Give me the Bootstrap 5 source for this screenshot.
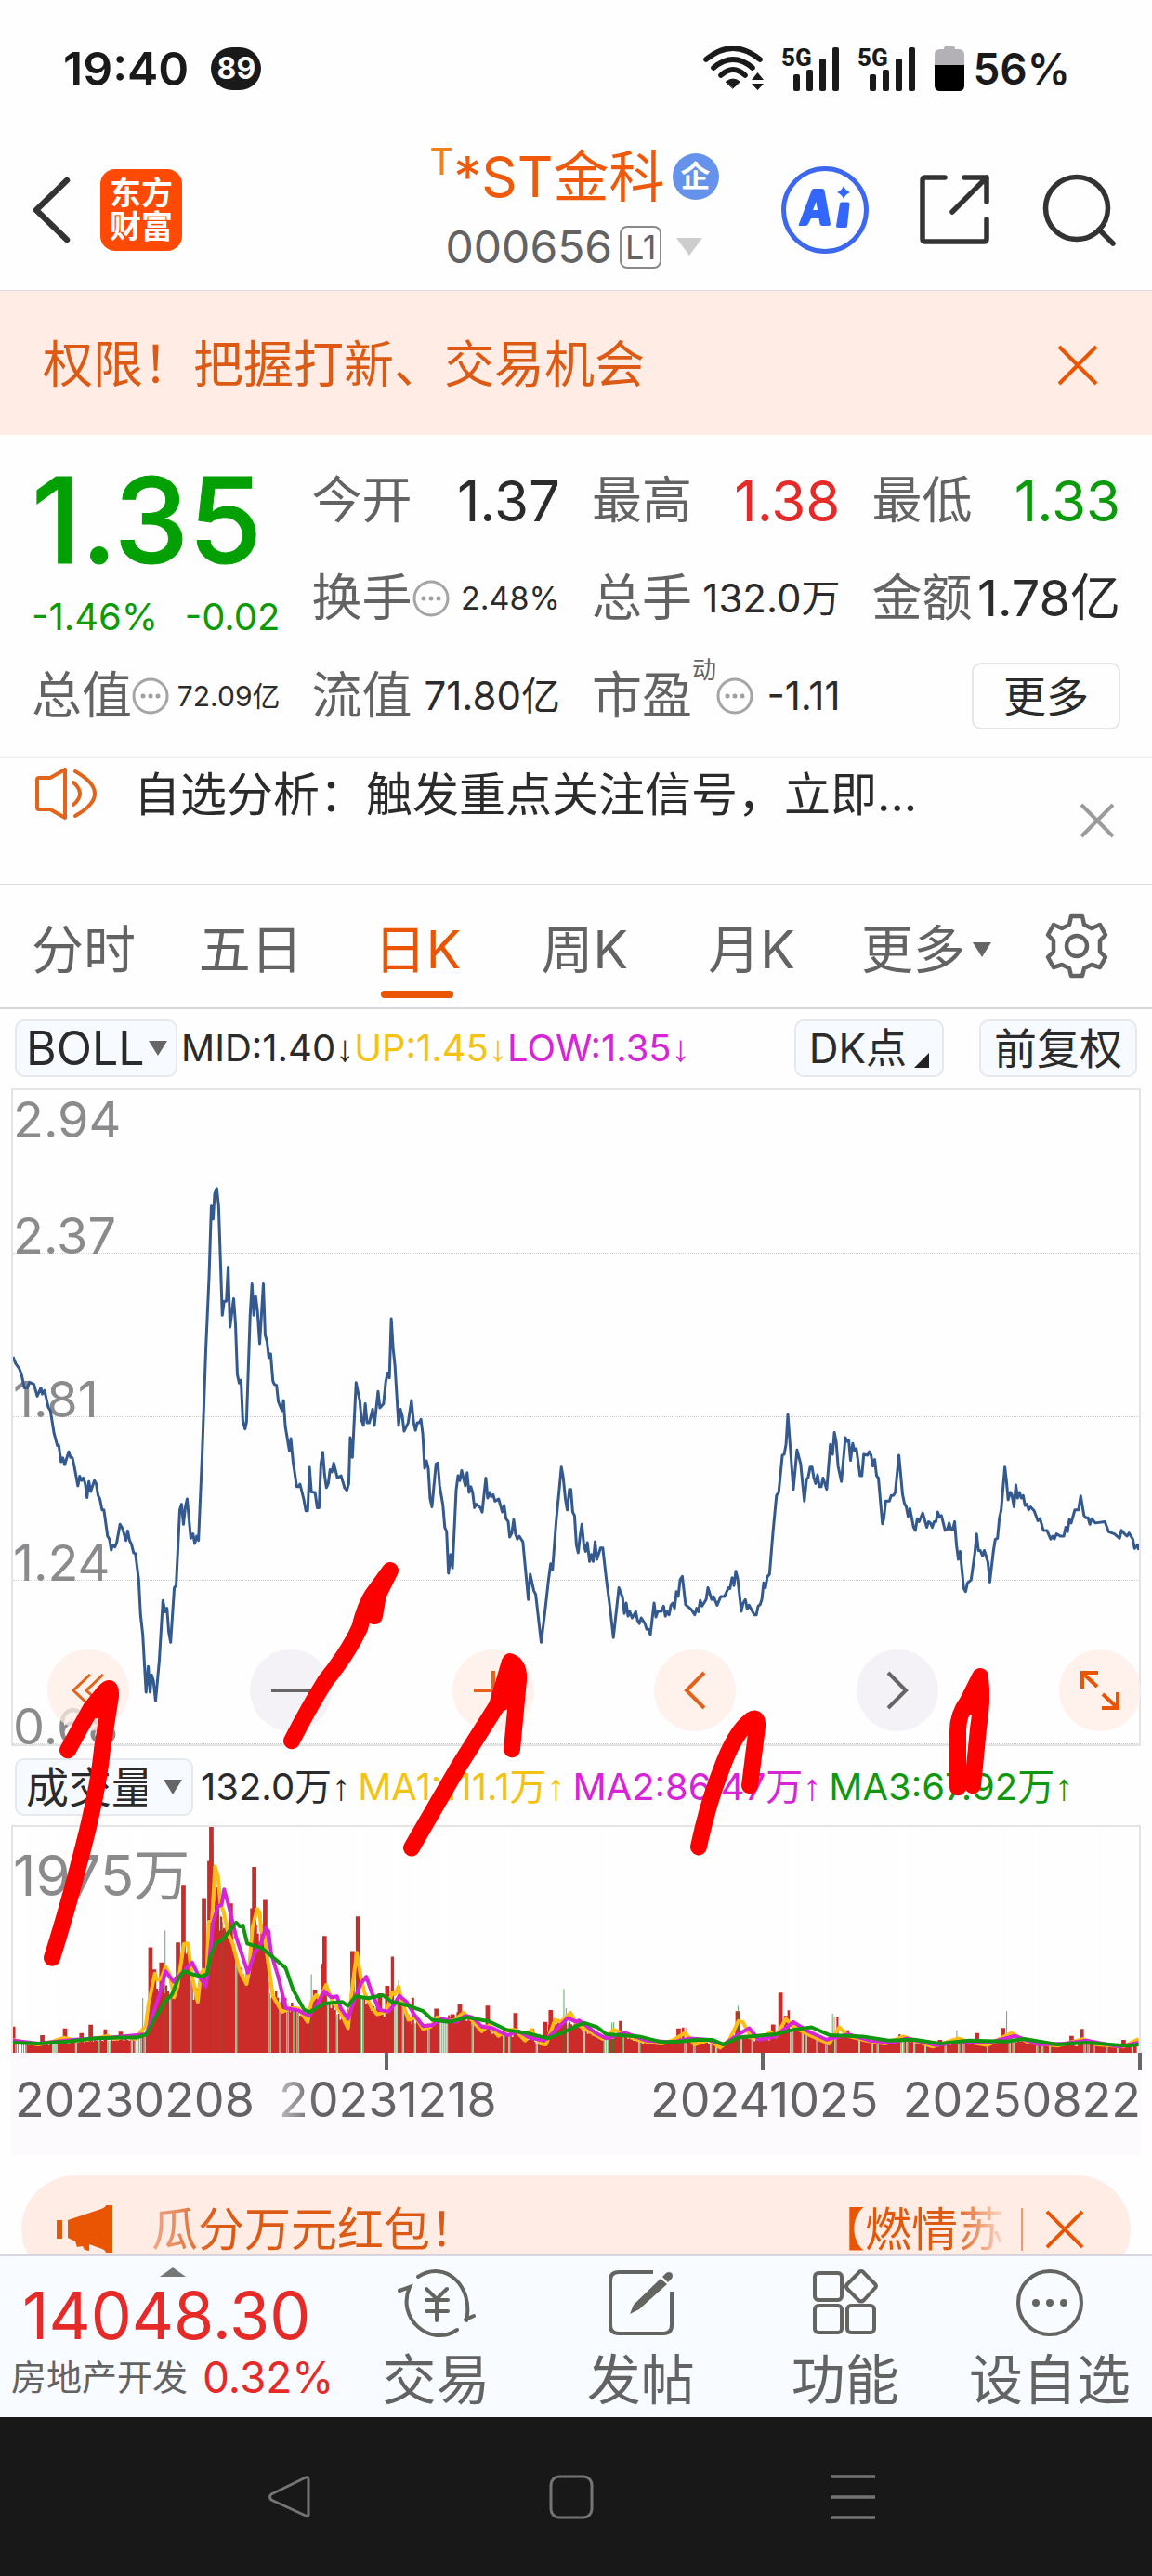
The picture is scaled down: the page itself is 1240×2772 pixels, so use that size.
<!DOCTYPE html>
<html lang="zh-CN">
<head>
<meta charset="utf-8">
<meta name="viewport" content="width=device-width, initial-scale=1">
<title>*ST金科 000656</title>
<link href="https://cdn.jsdelivr.net/npm/bootstrap@5.3.0/dist/css/bootstrap.min.css" rel="stylesheet">
<style>
  :root { --orange:#ea5504; --ink:#2b2b2b; --dim:#636363; --up:#e62a28; --down:#0a9a0a; --hair:#d9d9de; }
  body { font-family: Inter, "Noto Sans CJK SC", sans-serif; color: var(--ink); background:#fefefe; line-height:1; overflow-x:hidden; }
  svg { display:block; flex:none; }
  button { border:0; background:none; padding:0; color:inherit; line-height:1; }
  a { color:inherit; text-decoration:none; }
  .nowrap { white-space:nowrap; }
  .c-orange { color:var(--orange); } .c-up { color:var(--up); } .c-down { color:var(--down); } .c-dim { color:var(--dim); }
  .c-gold { color:#f5c211; } .c-pink { color:#d724d9; } .c-green { color:#0f970f; }

  .sysbar { height:148px; padding:0 88px 0 68px; font-size:50px; font-weight:600; color:#1a1a1a; }
  .sysbar .count { width:54px; height:46px; border-radius:23px; background:#1a1a1a; color:#fff; font-size:32px; font-weight:700; }
  .sysbar .pct { font-size:46px; }
  .sysbar .signals { gap:18px; }
  .topbar { height:165px; padding:0 38px 8px 34px; border-bottom:1px solid var(--hair); }
  .topbar .side { flex:1 1 0; }
  .topbar .tools { gap:52px; }
  .brand { width:88px; height:88px; border-radius:16px; margin-left:30px; background:#ff4a05; color:#fff; font-size:34px; font-weight:700; line-height:36px; }
  .stock-name { font-size:60px; line-height:64px; color:#f0590a; }
  .stock-name .flag { font-size:40px; line-height:32px; color:#f08019; }
  .corp { width:50px; height:50px; border-radius:50%; background:#6592ea; color:#fff; font-size:32px; font-weight:700; }
  .stock-code { font-size:48px; line-height:56px; color:var(--dim); }
  .level { border:2px solid #8a8a8a; border-radius:8px; font-size:36px; line-height:42px; padding:0 4px; }

  .promo { height:155px; background:#ffede5; font-size:54px; padding:4px 58px 0 46px; color:#dc5a14; }
  .quotes { padding:18px 34px 14px; display:grid; grid-template-columns:repeat(4,minmax(0,1fr)); column-gap:34px; grid-auto-rows:105px; }
  .quotes .price-cell { grid-row:span 2; }
  .price { font-size:128px; font-weight:500; line-height:148px; color:#03a003; -webkit-text-stroke:1px #03a003; }
  .change { font-size:40px; line-height:60px; }
  .q-label { font-size:54px; color:var(--dim); }
  .v-xl { font-size:60px; } .v-l { font-size:54px; } .v-m { font-size:42px; } .v-s { font-size:34px; } .v-xs { font-size:30px; }
  .dyn { font-size:26px; align-self:flex-start; color:var(--dim); margin-top:12px; }
  .more-btn { width:160px; height:72px; border:2px solid #e6e6e6; border-radius:10px; font-size:46px; }
  .notice { height:137px; border-top:1px solid #ececec; border-bottom:1px solid var(--hair); padding:10px 40px 0 38px; font-size:50px; line-height:58px; }
  .notice a { margin-left:40px; }
  .notice button { margin-top:38px; }

  .periods { height:134px; border-bottom:2px solid #d8d8dc; font-size:56px; color:var(--dim); }
  .periods .tab { flex:0 0 14.5%; position:relative; line-height:72px; padding-top:8px; }
  .periods .tab.on::after { content:""; position:absolute; left:50%; bottom:-16px; width:78px; margin-left:-39px; height:8px; border-radius:4px; background:var(--orange); }

  .ind-row { padding:11px 16px 12px; height:85px; }
  .ind-row.vol { padding:13px 16px 10px; }
  .chip, select.chip { height:62px; border:2px solid #e6e8ee; border-radius:10px; background-color:#f7faff; font-size:46px; line-height:56px; color:var(--ink); padding:0 14px; width:auto; }
  .chip.dk { margin-right:38px; font-size:44px; }
  select.chip { appearance:none; padding:0 48px 0 10px; background-repeat:no-repeat; background-position:right 10px center; background-size:20px 16px;
    background-image:url("data:image/svg+xml,%3Csvg xmlns='http://www.w3.org/2000/svg' viewBox='0 0 20 16'%3E%3Cpath d='M0 0h20L10 16z' fill='%23666'/%3E%3C/svg%3E"); }
  select.boll { width:175px; padding-right:30px; background-position:right 9px center; font-size:50px; }
  select.volsel { width:192px; }
  .readout { font-size:40px; }
  .readout i { font-family:"Liberation Sans","DejaVu Sans",sans-serif; font-style:normal; }

  .plot { margin:0 12px; border:2px solid #e4e4e4; position:relative; }
  .plot > svg.curve { position:absolute; inset:0; width:100%; height:100%; }
  .plot .band { height:176px; border-bottom:1px dotted #d2d2d2; }
  .plot .band:last-of-type { border-bottom:0; }
  .axis-num { font-size:54px; line-height:36px; color:#8b8a8c; }
  .plot .top-num { position:absolute; left:0; top:14px; }
  .round-tools { position:absolute; left:37px; right:-2px; bottom:14px; }
  .round-tools button { width:88px; height:88px; border-radius:50%; background:rgba(255,236,228,.75); }
  .round-tools button.grey { background:rgba(243,240,246,.85); }
  .volplot { height:245px; border-bottom:0; }
  .volplot .axis-num { font-size:60px; position:absolute; left:0; top:34px; }
  .dates { margin:0 12px; background:#fdfafe; height:110px; font-size:52px; color:var(--dim); }
  .dates .tick { flex:1; height:19px; border-right:4px solid #666; }
  .dates .tick-row { margin-right:-1px; }
  .dates .labels { display:grid; grid-template-columns:minmax(0,1fr) minmax(0,2fr) minmax(0,2fr) minmax(0,1fr); padding-top:6px; line-height:52px; }
  .fade-in { background:linear-gradient(90deg,#bbb,#636363 18%); -webkit-background-clip:text; background-clip:text; color:transparent; }
  .marks { position:absolute; inset:0; width:100%; height:100%; pointer-events:none; z-index:5; }

  .ticker-wrap { height:107px; padding:22px 23px 0; overflow:hidden; }
  .ticker { height:116px; border-radius:58px; background:#ffede5; padding:0 50px 0 38px; font-size:50px; color:#dc5a14; }
  .ticker .msg { flex:1; margin-left:40px; line-height:60px; }
  .ticker .msg a { color:transparent; -webkit-background-clip:text; background-clip:text; }
  .ticker .lead-msg { background-image:linear-gradient(90deg,#f0a888,#dc5a14 20%); }
  .ticker .next-msg { background-image:linear-gradient(90deg,#ea5504 20%,#dc5a14 72%,#fbdccd); }
  .ticker .rule { width:2px; height:46px; margin-left:18px; background:#e89c78; }
  .dock { height:175px; border-top:2px solid #d6d6de; background:#f8fbff; color:var(--dim); }
  .dock .sector { flex:0 0 354px; padding:12px 0 0 12px; }
  .dock .idx { font-size:70px; line-height:84px; padding-left:12px; }
  .dock .sub { font-size:38px; line-height:48px; }
  .dock .sub b { font-weight:400; font-size:46px; }
  .dock .item { flex:1; font-size:58px; line-height:72px; padding-top:11px; }
  .navkeys { height:171px; background:#181818; padding-right:10px; }
  .navkeys .keys { width:74%; }
</style>
</head>
<body>
<div class="sysbar d-flex align-items-center justify-content-between">
  <div class="d-flex align-items-center gap-4"><span>19:40</span><span class="count d-flex align-items-center justify-content-center">89</span></div>
  <div class="signals d-flex align-items-center">
    <svg width="66" height="48" viewBox="0 0 66 48" fill="none" stroke="#1a1a1a" stroke-width="5.6" stroke-linecap="round">
      <path d="M3 14Q32-10 61 14M11 23Q32 5 53 23M19 31Q32 19 45 31"/><path d="M24.500 38Q32 32 39.500 38L32 45z" fill="#1a1a1a" stroke-width="1"/><path d="M52 36h13L58.500 28zM52 40h13L58.500 47z" fill="#1a1a1a" stroke="none"/></svg>
    <svg width="64" height="52" viewBox="0 0 64 52" fill="#1a1a1a"><text x="0" y="23" font-family="Roboto" font-size="26" font-weight="800">5G</text><rect x="13" y="32" width="7" height="18" rx="2"/><rect x="27" y="27" width="7" height="23" rx="2"/><rect x="41" y="15" width="7" height="35" rx="2"/><rect x="55" y="3" width="7" height="47" rx="2"/></svg>
    <svg width="64" height="52" viewBox="0 0 64 52" fill="#1a1a1a"><text x="0" y="23" font-family="Roboto" font-size="26" font-weight="800">5G</text><rect x="13" y="32" width="7" height="18" rx="2"/><rect x="27" y="27" width="7" height="23" rx="2"/><rect x="41" y="15" width="7" height="35" rx="2"/><rect x="55" y="3" width="7" height="47" rx="2"/></svg>
    <span class="d-flex align-items-center gap-2"><svg width="34" height="52" viewBox="0 0 34 52"><path d="M11 5Q11 1 15 1h4q4 0 4 4h4q6 0 6 6v12H1V11q0-6 6-6z" fill="#b3b1b6"/><path d="M1 22h32v22q0 6-6 6H7q-6 0-6-6z" fill="#000"/></svg>
    <span class="pct">56%</span></span>
  </div>
</div>

<header class="topbar d-flex align-items-center">
  <div class="side d-flex align-items-center">
    <button aria-label="返回"><svg width="44" height="72" viewBox="0 0 44 72" fill="none" stroke="#333" stroke-width="6.500" stroke-linecap="round" stroke-linejoin="round"><path d="M38 4L5 36l33 32"/></svg></button>
    <a href="#" class="brand d-block text-center pt-2 nowrap">东方<br>财富</a>
  </div>
  <div class="text-center nowrap">
    <div class="stock-name d-flex align-items-center justify-content-center"><span class="flag align-self-start">T</span><span>*ST金科</span><span class="corp d-flex align-items-center justify-content-center ms-2">企</span></div>
    <div class="stock-code d-flex align-items-center justify-content-center mt-3"><span>000656</span><span class="level ms-2">L1</span><svg class="ms-3" width="28" height="20" viewBox="0 0 28 20"><path d="M0 0h28L14 19z" fill="#cdcdcd"/></svg></div>
  </div>
  <div class="side tools d-flex align-items-center justify-content-end">
    <button aria-label="AI"><svg width="96" height="96" viewBox="0 0 96 96"><circle cx="48" cy="48" r="44.500" fill="none" stroke="#3d68ee" stroke-width="5"/><g fill="#3366fb"><path fill-rule="evenodd" d="M34 26q1-1 2-1h9q2 0 2.500 2l6.500 36q0 2-2 2h-7q-2 0-2.500-2l-1-6H33l-3 6q-1 2-3 2h-6q-2 0-1-2zM38.500 39L35 48h5z"/><path d="M64 41q0-1.500 2-1.500h6.500q2 0 2 2L72 65q0 2-2 2h-8q-2 0-2-2z"/><path d="M68 22q2 5 7 7-5 2-7 7-2-5-7-7 5-2 7-7z"/></g></svg></button>
    <button aria-label="分享"><svg width="80" height="80" viewBox="0 0 80 80" fill="none" stroke="#333" stroke-width="5.500" stroke-linecap="round" stroke-linejoin="round"><path d="M29 5H8q-3 0-3 3v63q0 3 3 3h63q3 0 3-3V50M50 5h24v26M74 5L37 42"/></svg></button>
    <button aria-label="搜索"><svg width="82" height="80" viewBox="4 0 82 80" fill="none" stroke="#333" stroke-width="5.500" stroke-linecap="round"><circle cx="43" cy="38" r="33.500"/><path d="M67 61l15 15"/></svg></button>
  </div>
</header>

<div class="promo d-flex align-items-center justify-content-between">
  <span class="nowrap">权限！把握打新、交易机会</span>
  <button aria-label="关闭"><svg width="44" height="44" viewBox="0 0 44 44" stroke="#ea5504" stroke-width="4"><path d="M2 2l40 40M42 2L2 42"/></svg></button>
</div>

<section class="quotes nowrap">
  <div class="price-cell d-flex flex-column">
    <div class="price">1.35</div>
    <div class="change c-down d-flex justify-content-between"><span>-1.46%</span><span>-0.02</span></div>
  </div>
  <div class="d-flex align-items-center justify-content-between"><span class="q-label">今开</span><span class="v-xl">1.37</span></div>
  <div class="d-flex align-items-center justify-content-between"><span class="q-label">最高</span><span class="v-xl c-up">1.38</span></div>
  <div class="d-flex align-items-center justify-content-between"><span class="q-label">最低</span><span class="v-xl c-down">1.33</span></div>
  <div class="d-flex align-items-center justify-content-between"><span class="d-flex align-items-center"><span class="q-label">换手</span><svg width="40" height="40" viewBox="0 0 40 40"><use href="#dots"/></svg></span><span class="v-s">2.48%</span></div>
  <div class="d-flex align-items-center justify-content-between"><span class="q-label">总手</span><span class="v-m">132.0万</span></div>
  <div class="d-flex align-items-center justify-content-between"><span class="q-label">金额</span><span class="v-l">1.78亿</span></div>
  <div class="d-flex align-items-center justify-content-between"><span class="d-flex align-items-center"><span class="q-label">总值</span><svg width="40" height="40" viewBox="0 0 40 40"><use href="#dots"/></svg></span><span class="v-xs">72.09亿</span></div>
  <div class="d-flex align-items-center justify-content-between"><span class="q-label">流值</span><span class="v-m">71.80亿</span></div>
  <div class="d-flex align-items-center justify-content-between"><span class="d-flex align-items-center align-self-stretch"><span class="q-label">市盈</span><span class="dyn">动</span><svg width="40" height="40" viewBox="0 0 40 40"><use href="#dots"/></svg></span><span class="v-m">-1.11</span></div>
  <div class="d-flex align-items-center justify-content-end"><button class="more-btn">更多</button></div>
</section>
<svg width="0" height="0" class="position-absolute"><defs><g id="dots"><circle cx="20" cy="20" r="18" fill="none" stroke="#a5a5a5" stroke-width="3"/><g fill="#a0a0a0"><circle cx="12" cy="20" r="2.500"/><circle cx="20" cy="20" r="2.500"/><circle cx="28" cy="20" r="2.500"/></g></g></defs></svg>

<div class="notice d-flex align-items-start">
  <svg width="66" height="56" viewBox="0 0 66 56" fill="none" stroke="#e2641c" stroke-width="4" stroke-linejoin="round" stroke-linecap="round"><path d="M2 13q0-2 2-2h12L32 2v52L16 45H4q-2 0-2-2zM41 16q14 12 0 24M43 4q42 24 0 48"/></svg>
  <a href="#" class="flex-grow-1 nowrap">自选分析：触发重点关注信号，立即...</a>
  <button aria-label="关闭提示"><svg width="38" height="38" viewBox="0 0 38 38" stroke="#9b9b9b" stroke-width="4"><path d="M2 2l34 34M36 2L2 36"/></svg></button>
</div>

<nav class="periods d-flex align-items-center nowrap text-center">
  <a href="#" class="tab">分时</a><a href="#" class="tab">五日</a><a href="#" class="tab on c-orange">日K</a><a href="#" class="tab">周K</a><a href="#" class="tab">月K</a>
  <a href="#" class="tab d-flex align-items-center justify-content-center ps-3">更多<svg class="ms-2" width="20" height="16" viewBox="0 0 20 16"><path d="M0 0h20L10 16z" fill="#666"/></svg></a>
  <button class="flex-grow-1 d-flex justify-content-center" aria-label="设置"><svg width="70" height="70" viewBox="0 0 70 70" fill="none" stroke="#636363" stroke-width="4.500" stroke-linejoin="round"><circle cx="35" cy="35" r="11"/><path d="M29 3h12l2 9 8 4 9-4 6 11-6 6v12l6 6-6 11-9-3-8 4-2 8H29l-2-8-8-4-9 3L4 47l6-6V29l-6-6 6-11 9 4 8-4z"/></svg></button>
</nav>

<main class="position-relative">
  <div class="ind-row d-flex align-items-center nowrap">
    <select class="chip boll" aria-label="主图指标"><option>BOLL</option></select>
    <span class="readout ms-1"><span>MID:1.40<i>↓</i></span><span class="c-gold">UP:1.45<i>↓</i></span><span class="c-pink">LOW:1.35<i>↓</i></span></span>
    <button class="chip dk ms-auto d-flex align-items-center">DK点<svg class="ms-2 align-self-end mb-2" width="16" height="16" viewBox="0 0 16 16"><path d="M16 0v16H0z" fill="#222"/></svg></button>
    <button class="chip">前复权</button>
  </div>

  <div class="plot">
    <div class="band d-flex flex-column justify-content-end"><span class="axis-num">2.37</span></div>
    <div class="band d-flex flex-column justify-content-end"><span class="axis-num">1.81</span></div>
    <div class="band d-flex flex-column justify-content-end"><span class="axis-num">1.24</span></div>
    <div class="band d-flex flex-column justify-content-end"><span class="axis-num">0.68</span></div>
    <span class="axis-num top-num">2.94</span>
    <svg class="curve" viewBox="31 25 3072 1496" preserveAspectRatio="none" fill="none" stroke="#34598f">
      <polyline vector-effect="non-scaling-stroke" stroke-width="3" stroke-linejoin="round" points="31,635 38,650 48,662 54,675 62,706 70,706 76,693 88,698 97,725 107,706 111,720 117,712 127,750 133,758 143,810 152,838 156,838 162,875 167,866 172,882 183,852 188,865 193,866 198,885 208,930 213,908 218,918 223,912 228,925 233,957 238,920 243,943 253,918 258,925 263,952 268,960 274,985 279,985 289,1045 294,1052 299,1077 303,1065 309,1070 314,1060 323,1018 330,1028 339,1055 344,1033 349,1055 354,1063 360,1083 365,1085 374,1145 379,1225 385,1270 394,1402 400,1343 405,1402 409,1362 414,1375 420,1422 430,1330 440,1192 446,1218 451,1210 456,1265 461,1288 471,1163 476,1158 486,985 491,972 496,1018 501,980 506,960 516,1050 522,1040 527,1062 532,1045 537,1055 547,860 557,620 566,450 572,290 577,320 581,262 587,250 592,290 602,540 607,508 613,508 618,430 623,567 633,502 638,560 643,675 648,695 653,688 658,780 664,800 668,785 678,540 683,468 688,540 693,496 698,530 704,605 714,468 719,585 724,600 729,637 734,628 740,690 744,698 750,700 755,738 765,758 769,735 774,795 785,850 789,822 795,875 805,932 810,932 814,926 824,960 830,987 835,987 840,888 845,944 855,945 861,980 866,980 871,880 876,853 881,905 886,934 891,925 896,893 901,898 906,878 916,912 926,907 936,935 942,940 947,925 951,820 957,865 967,694 977,735 982,780 987,792 992,742 997,786 1003,786 1012,755 1017,792 1027,714 1032,752 1042,742 1048,692 1053,672 1058,683 1063,548 1068,615 1073,655 1083,792 1088,755 1093,770 1098,805 1109,786 1118,735 1124,785 1129,803 1134,786 1139,786 1144,778 1149,812 1154,890 1159,873 1164,890 1169,960 1174,978 1185,880 1190,878 1195,930 1204,975 1209,1025 1214,1035 1219,1130 1225,1087 1230,1118 1240,940 1245,907 1250,918 1255,895 1265,930 1270,900 1275,945 1280,932 1285,945 1290,980 1295,972 1306,980 1311,990 1321,912 1326,958 1331,945 1336,955 1341,950 1346,965 1356,960 1366,990 1371,975 1376,1005 1382,1012 1386,1047 1392,1038 1397,1007 1402,1040 1407,1052 1412,1045 1422,1058 1437,1190 1442,1132 1452,1170 1457,1178 1472,1288 1482,1220 1492,1145 1498,1108 1503,1122 1513,1010 1522,932 1527,887 1532,910 1538,960 1543,985 1549,938 1553,938 1558,990 1563,998 1568,1065 1573,1083 1578,1045 1583,1018 1588,1062 1593,1080 1598,1060 1604,1103 1609,1087 1614,1103 1619,1058 1624,1098 1634,1072 1640,1072 1650,1145 1660,1210 1669,1277 1684,1163 1694,1185 1699,1222 1704,1198 1709,1228 1714,1218 1720,1232 1730,1218 1735,1238 1740,1245 1745,1232 1755,1245 1760,1258 1765,1258 1770,1270 1780,1198 1785,1230 1790,1217 1800,1217 1806,1205 1811,1228 1816,1218 1821,1225 1826,1203 1831,1198 1836,1210 1841,1172 1846,1183 1851,1145 1857,1137 1866,1202 1881,1212 1891,1225 1896,1210 1901,1218 1906,1192 1911,1205 1922,1190 1927,1163 1937,1190 1942,1183 1952,1203 1962,1183 1972,1183 1983,1163 1987,1165 1993,1140 1998,1158 2003,1125 2008,1142 2018,1217 2023,1198 2029,1190 2034,1212 2039,1203 2049,1218 2054,1225 2059,1225 2064,1205 2069,1202 2074,1190 2079,1152 2084,1163 2089,1138 2095,1132 2104,1040 2114,952 2120,945 2130,860 2135,858 2140,835 2145,767 2160,938 2170,848 2180,880 2190,965 2196,915 2200,912 2206,887 2211,887 2216,912 2221,925 2226,905 2231,932 2236,932 2241,912 2251,938 2261,835 2267,858 2272,808 2277,830 2282,885 2291,920 2302,820 2306,828 2311,825 2316,872 2322,833 2327,850 2332,845 2342,907 2347,907 2352,858 2362,860 2367,852 2372,860 2377,885 2382,870 2387,907 2392,912 2403,1017 2407,1005 2412,965 2422,965 2427,952 2433,952 2438,945 2448,860 2458,950 2463,970 2468,978 2473,1000 2478,982 2488,1025 2493,1032 2498,1005 2503,1012 2513,992 2524,1025 2529,1012 2534,1015 2539,1025 2544,1012 2549,1012 2554,990 2559,1002 2564,998 2574,1032 2580,1030 2585,1015 2590,1030 2595,1030 2600,1012 2605,1065 2610,1098 2615,1080 2625,1165 2630,1172 2635,1152 2645,1145 2655,1085 2660,1040 2665,1078 2670,1078 2676,1090 2681,1078 2691,1105 2696,1150 2706,1078 2711,1052 2717,1050 2722,1005 2727,985 2737,887 2741,915 2746,962 2752,945 2756,950 2762,978 2767,928 2772,958 2777,945 2782,958 2787,952 2792,975 2797,972 2802,985 2807,978 2817,987 2827,1010 2833,1005 2842,1032 2852,1032 2862,1052 2867,1045 2872,1052 2878,1040 2888,1045 2898,1045 2903,1025 2908,1035 2913,1007 2918,1015 2928,985 2938,985 2944,953 2953,998 2958,1003 2964,1003 2969,1018 2974,1005 2984,1015 3010,1012 3020,1035 3036,1040 3050,1050 3055,1032 3066,1042 3070,1045 3076,1038 3086,1052 3091,1073 3099,1065 3102,1077"/>
    </svg>
    <div class="round-tools d-flex justify-content-between">
      <button class="d-flex align-items-center justify-content-center c-orange" aria-label="最早"><svg width="40" height="36" viewBox="0 0 40 36" fill="none" stroke="#e2641c" stroke-width="3"><path d="M22 1L4 18l18 17M36 1L18 18l18 17"/></svg></button>
      <button class="grey d-flex align-items-center justify-content-center" aria-label="缩小"><svg width="44" height="36" viewBox="0 0 44 36" stroke="#666" stroke-width="4"><path d="M1 18h42"/></svg></button>
      <button class="d-flex align-items-center justify-content-center" aria-label="放大"><svg width="44" height="44" viewBox="0 0 44 44" stroke="#e2641c" stroke-width="4"><path d="M1 22h42M22 1v42"/></svg></button>
      <button class="d-flex align-items-center justify-content-center" aria-label="左移"><svg width="26" height="42" viewBox="0 0 26 42" fill="none" stroke="#e2641c" stroke-width="4"><path d="M23 2L4 21l19 19"/></svg></button>
      <button class="grey d-flex align-items-center justify-content-center" aria-label="右移"><svg width="26" height="42" viewBox="0 0 26 42" fill="none" stroke="#666" stroke-width="4"><path d="M3 2l19 19L3 40"/></svg></button>
      <button class="d-flex align-items-center justify-content-center" aria-label="全屏"><svg width="46" height="46" viewBox="0 0 46 46" fill="none" stroke="#ea5504" stroke-width="4"><path d="M21 4H4v17M4 4l16 15M42 25v17H25M42 42L26 27"/></svg></button>
    </div>
  </div>

  <div class="ind-row vol d-flex align-items-center nowrap">
    <select class="chip volsel" aria-label="副图指标"><option>成交量</option></select>
    <span class="readout ms-2">132.0万<i>↑</i></span>
    <span class="readout ms-2 c-gold">MA1:111.1万<i>↑</i></span>
    <span class="readout ms-2 c-pink">MA2:86.47万<i>↑</i></span>
    <span class="readout ms-2 c-green">MA3:67.92万<i>↑</i></span>
  </div>

  <div class="plot volplot">
    <svg class="curve" viewBox="31 312 3072 733" preserveAspectRatio="none" fill="none">
      <g id="bars"></g>
      <g stroke-width="4" stroke-linejoin="round">
        <polyline vector-effect="non-scaling-stroke" stroke="#fdbd12" points="31,1003 60,1010 100,1018 140,1008 170,996 200,1005 250,1000 290,990 310,1000 340,990 365,1000 385,968 393,960 400,890 418,788 425,808 435,805 447,765 458,790 470,865 480,830 497,692 508,690 520,800 535,880 543,790 550,775 560,790 565,620 574,615 582,440 590,470 597,560 606,590 618,660 630,690 650,780 668,822 675,780 684,640 697,578 704,590 708,650 716,660 740,860 765,912 790,900 810,902 835,945 845,880 858,858 868,870 885,825 903,880 925,915 945,965 955,850 969,720 980,800 990,850 1010,900 1025,920 1050,912 1065,850 1073,855 1083,830 1090,870 1110,938 1130,930 1150,968 1170,960 1188,930 1210,940 1235,940 1260,915 1280,935 1310,975 1330,955 1355,990 1380,970 1400,970 1428,1005 1445,970 1470,1015 1485,1018 1510,938 1525,945 1552,915 1568,950 1588,965 1640,1000 1670,970 1700,985 1740,1005 1800,1015 1830,1005 1865,980 1890,1018 1930,1003 1960,1028 1985,1003 2010,942 2022,945 2045,995 2070,998 2098,978 2112,992 2140,935 2160,960 2200,985 2258,1015 2285,962 2310,990 2360,1005 2410,1015 2460,992 2540,1025 2610,998 2640,1010 2690,1020 2755,980 2800,1010 2880,1022 2950,1000 2990,1018 3060,1025 3102,1000"/>
        <polyline vector-effect="non-scaling-stroke" stroke="#d724d9" points="31,1005 100,1015 200,1002 300,995 395,985 410,930 430,860 447,780 470,815 500,775 520,752 535,790 557,830 565,760 577,620 590,570 600,565 607,515 620,570 640,670 672,785 690,720 705,700 720,640 728,650 735,720 755,800 775,900 810,908 838,925 860,890 880,845 900,865 915,862 925,900 945,935 960,880 980,820 995,798 1010,850 1030,905 1055,912 1070,890 1085,860 1105,880 1125,920 1150,958 1175,955 1200,935 1240,945 1265,925 1285,930 1310,960 1340,965 1380,988 1410,975 1440,995 1480,1005 1500,985 1545,932 1568,945 1575,940 1620,980 1650,998 1700,980 1760,1005 1830,1010 1880,998 1930,1003 1970,1018 2010,985 2040,965 2065,1002 2110,992 2160,945 2200,975 2250,1002 2310,985 2370,1005 2430,1012 2470,998 2550,1020 2620,1008 2700,1010 2765,990 2830,1018 2900,1015 2960,1005 3050,1025 3102,1012"/>
        <polyline vector-effect="non-scaling-stroke" stroke="#119611" points="31,1012 100,1015 180,1008 250,998 320,995 370,995 395,985 420,930 445,880 465,855 480,810 497,780 520,790 545,797 560,790 570,730 585,690 605,675 640,622 650,635 658,632 670,690 695,700 710,705 745,740 775,770 795,840 825,905 840,913 880,885 930,880 945,893 965,862 1000,868 1040,858 1065,880 1110,892 1150,910 1175,938 1220,945 1270,930 1330,943 1380,972 1430,980 1490,998 1530,980 1568,958 1590,948 1625,962 1650,985 1740,992 1800,1010 1850,1008 1900,1002 1940,1003 1970,1018 2010,995 2060,990 2110,985 2160,970 2210,962 2260,988 2350,992 2420,1005 2490,1002 2560,1015 2640,1005 2740,1008 2790,1000 2880,1018 2960,1012 3070,1022 3102,1018"/>
      </g>
    </svg>
    <span class="axis-num">1975万</span>
  </div>
  <div class="dates">
    <div class="tick-row d-flex"><span class="tick"></span><span class="tick"></span><span class="tick"></span></div>
    <div class="labels nowrap"><span class="ps-1">20230208</span><span class="text-center"><span class="fade-in">20231218</span></span><span class="text-center">20241025</span><span class="d-flex justify-content-end">20250822</span></div>
  </div>

  <svg class="marks" viewBox="0 1087 1240 1231" preserveAspectRatio="none" fill="none" stroke="#f00" stroke-width="18" stroke-linecap="round" stroke-linejoin="round">
    <path d="M73 1883L98 1838 112 1821Q120 1811 119 1825L110 1882Q107 1915 94 1970 74 2050 56 2106M102 1840L113 1835"/>
    <path d="M314 1873Q332 1838 350 1809 375 1778 387 1752 393 1728 401 1716L420 1690 407 1716 403 1739 396 1732"/>
    <path d="M443 1988L494 1900Q518 1862 535 1835L549 1788Q559 1792 558 1808L551 1882M540 1832L552 1800"/>
    <path d="M752 1987Q762 1940 776 1905 790 1865 808 1851 816 1846 815 1858L807 1921"/>
    <path d="M1031 1923V1862Q1031 1845 1042 1830L1055 1804Q1058 1830 1053 1860L1047 1921M1044 1836L1050 1820"/>
  </svg>
</main>

<div class="ticker-wrap">
  <div class="ticker d-flex align-items-center">
    <svg width="62" height="52" viewBox="0 0 62 52" fill="#ea5504"><path d="M0 16h6v20H0zM12 16L48 4q5-2 5-4h7v51h-7q0-2-4-4l-14-5v7l-5-1-2-4-6 1-2-6-8-4z"/></svg>
    <div class="msg d-flex justify-content-between nowrap"><a href="#" class="lead-msg">瓜分万元红包！</a><a href="#" class="next-msg">【燃情苏</a></div>
    <span class="rule"></span>
    <button class="ms-4" aria-label="关闭横幅"><svg width="42" height="42" viewBox="0 0 44 44" stroke="#ea5504" stroke-width="4"><path d="M2 2l40 40M42 2L2 42"/></svg></button>
  </div>
</div>

<footer>
  <div class="dock d-flex nowrap">
    <div class="sector"><svg class="mx-auto" width="28" height="10" viewBox="0 0 28 10"><path d="M14 0l14 10H0z" fill="#777"/></svg>
      <div class="idx c-up">14048.30</div>
      <div class="sub d-flex align-items-center"><span>房地产开发</span><b class="c-up ms-3">0.32%</b></div>
    </div>
    <a href="#" class="item d-flex flex-column align-items-center"><svg width="84" height="78" viewBox="0 0 84 78" fill="none" stroke="#646461" stroke-width="4" stroke-linecap="round"><path d="M22 11C52-8 82 22 74 58M2 26l11-4C-2 55 35 88 64 68M73 57l9-4M31 24l11 11 11-11M42 35v23M31 36h23M31 48h23"/></svg><span class="mt-2">交易</span></a>
    <a href="#" class="item d-flex flex-column align-items-center"><svg width="76" height="78" viewBox="0 0 76 78"><path d="M51 6H14Q5 6 5 15v48q0 9 9 9h48q9 0 9-9V27" fill="none" stroke="#646461" stroke-width="4"/><path d="M26 51l4-10L59 13l7 6L36 46zM61 11l4-4q3-2 6 0 2 3 0 6l-4 4z" fill="#646461"/></svg><span class="mt-2">发帖</span></a>
    <a href="#" class="item d-flex flex-column align-items-center"><svg width="76" height="78" viewBox="0 0 76 78" fill="none" stroke="#646461" stroke-width="4" stroke-linejoin="round"><rect x="5" y="7" width="29" height="29" rx="4"/><rect x="5" y="42" width="29" height="29" rx="4"/><rect x="40" y="42" width="29" height="29" rx="4"/><path d="M55 5q2 0 3 2l12 12q2 2 0 4L58 36q-3 3-6 0L40 24q-2-3 0-5L52 7q1-2 3-2z"/></svg><span class="mt-2">功能</span></a>
    <a href="#" class="item d-flex flex-column align-items-center"><svg width="76" height="78" viewBox="0 0 76 78"><circle cx="38" cy="39" r="34" fill="none" stroke="#646461" stroke-width="4"/><g fill="#646461"><circle cx="23" cy="39" r="4"/><circle cx="38" cy="39" r="4"/><circle cx="53" cy="39" r="4"/></g></svg><span class="mt-2">设自选</span></a>
  </div>
  <div class="navkeys d-flex align-items-center justify-content-center">
    <div class="keys d-flex">
      <button class="col d-flex justify-content-center" aria-label="后退"><svg width="50" height="50" viewBox="0 0 50 50" fill="none" stroke="#747474" stroke-width="3" stroke-linejoin="round"><path d="M45 6v38q0 3-3 1L5 28q-3-3 0-6L42 4q3-1 3 2z"/></svg></button>
      <button class="col d-flex justify-content-center" aria-label="主屏"><svg width="50" height="50" viewBox="0 0 50 50" fill="none" stroke="#747474" stroke-width="3"><rect x="3" y="3" width="44" height="44" rx="9"/></svg></button>
      <button class="col d-flex justify-content-center" aria-label="菜单"><svg width="50" height="50" viewBox="0 0 50 50" stroke="#747474" stroke-width="3.500"><path d="M1 3h48M1 25h48M1 47h48"/></svg></button>
    </div>
  </div>
</footer>

<script>
(() => {
  // Daily volume: bar tops along the base envelope, with the busiest days listed one by one.
  const base = [[31,1015],[100,1020],[200,1010],[300,1005],[370,1000],[392,980],[402,870],[430,830],[460,850],[480,800],[510,720],[520,870],[540,820],[555,750],[580,600],[600,650],[615,650],[630,700],[650,790],[670,800],[680,680],[710,660],[730,850],[760,880],[800,910],[830,930],[850,880],[880,870],[900,890],[930,950],[950,880],[975,850],[1000,890],[1040,930],[1070,880],[1090,880],[1110,940],[1150,960],[1190,935],[1250,925],[1300,955],[1350,985],[1400,990],[1450,1010],[1470,1018],[1490,960],[1520,945],[1568,955],[1590,975],[1650,1005],[1680,985],[1750,1015],[1850,1008],[1900,1002],[1960,1027],[2000,980],[2050,1003],[2100,1000],[2130,965],[2180,970],[2250,1005],[2300,990],[2400,1012],[2450,1002],[2550,1022],[2650,1008],[2750,1005],[2850,1015],[2930,1022],[2960,1008],[3050,1026],[3102,1012]];
  const red = [[31,960],[106,988],[168,966],[213,981],[238,954],[279,969],[320,976],[401,703],[411,774],[431,752],[476,687],[491,500],[506,715],[547,543],[562,422],[567,312],[583,508],[605,640],[620,560],[679,576],[684,442],[714,549],[769,867],[790,882],[850,840],[871,756],[876,666],[952,715],[967,602],[1027,852],[1047,828],[1063,733],[1119,866],[1181,902],[1225,920],[1245,888],[1321,892],[1397,916],[1442,967],[1478,945],[1493,906],[1685,942],[1842,966],[1857,963],[2003,910],[2100,953],[2120,850],[2135,925],[2145,907],[2272,928],[2302,972],[2448,985],[2555,1003],[2656,981],[2727,964],[2914,990],[2944,967],[3056,1003]];
  const green = [[385,867],[446,648],[577,367],[598,600],[603,620],[845,790],[887,860],[1069,760],[1083,810],[1534,838],[1540,900],[1665,947],[1670,945],[2009,892],[2267,918],[2606,972],[2742,910]];
  const falls = [40,45,50,55,60,65,140,145,150,203,265,290,295,355,365,370,375,380,390,460,516,640,732,760,780,798,808,890,915,980,985,1073,1078,1095,1128,1165,1195,1200,1205,1210,1215,1285,1370,1385,1460,1545,1590,1645,1650,1655,1695,1740,1865,1890,1935,1950,2018,2048,2153,2158,2185,2195,2225,2250,2275,2340,2375,2390,2455,2460,2470,2490,2520,2575,2612,2625,2690,2750,2760,2825,2840,2860,2955,2965,2980,3015,3045,3085];
  const envelope = x => { let i = 1; while (i < base.length - 1 && base[i][0] < x) i++; const a = base[i-1], b = base[i]; return a[1] + (b[1]-a[1]) * (x-a[0]) / (b[0]-a[0]); };
  let r = '', w = '', g = '', n = 0;
  for (let x = 31; x < 3096; x += 5) { const t = envelope(x), y = t + (1045 - t) * (((n++ * 37) % 11) / 11 - .5) * .22; r += `M${x} ${y.toFixed(0)}h6V1045h-6z`; }
  red.forEach(([x,y]) => r += `M${x-1} ${y}h12V1045h-12z`);
  falls.forEach(x => { w += `M${x} 312v733`; g += `M${x} ${Math.min(1028, envelope(x)).toFixed(0)}V1045`; });
  green.forEach(([x,y]) => { g += `M${x} ${y}V1045`; });
  document.getElementById('bars').innerHTML = `<path fill="#cb2c2a" d="${r}"/><path stroke="#fff" stroke-width="5" d="${w}"/><path stroke="#2b862b" stroke-width="2" d="${g}"/>`;
})();
</script>
<script src="https://cdn.jsdelivr.net/npm/bootstrap@5.3.0/dist/js/bootstrap.bundle.min.js"></script>
</body>
</html>
